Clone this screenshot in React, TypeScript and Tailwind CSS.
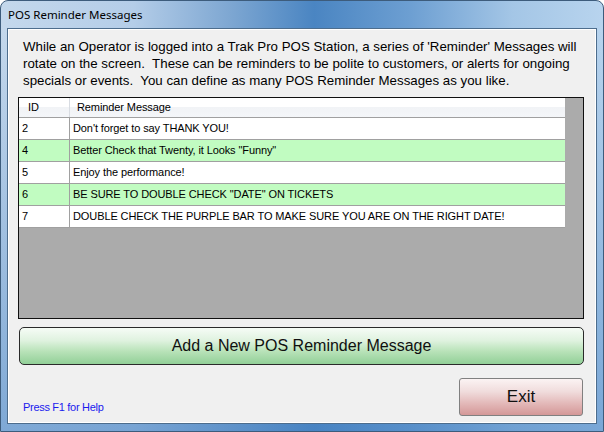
import React from "react";

const rows = [
  { id: "2", msg: "Don't forget to say THANK YOU!", green: false },
  { id: "4", msg: 'Better Check that Twenty, it Looks "Funny"', green: true },
  { id: "5", msg: "Enjoy the performance!", green: false },
  { id: "6", msg: 'BE SURE TO DOUBLE CHECK "DATE" ON TICKETS', green: true },
  { id: "7", msg: "DOUBLE CHECK THE PURPLE BAR TO MAKE SURE YOU ARE ON THE RIGHT DATE!", green: false },
];

export default function App() {
  return (
    <div className="w-[604px] h-[432px] relative overflow-hidden rounded-t-[8px] border border-[#3d5c7c] bg-[linear-gradient(90deg,#c4d8ec_0%,#b4cde8_22%,#7ea7d2_38%,#4a85c2_52%,#6d9fd2_68%,#a4c6e6_85%,#b8d4ee_100%)] flex flex-col">
      <div className="absolute inset-x-0 bottom-0 top-[28px] bg-[linear-gradient(180deg,rgba(80,140,200,0)_0%,rgba(70,130,195,0.55)_100%)] pointer-events-none" />
      <div className="h-[27px] flex items-center pl-[7px] relative">
        <span className="text-[11.5px] text-black" style={{ fontFamily: '"Noto Sans", "Open Sans", sans-serif' }}>
          POS Reminder Messages
        </span>
      </div>
      <div className="relative mx-[6px] mb-[7px] flex-1 border border-[#4d6d8d] bg-white p-px">
        <div className="w-full h-full bg-[#f0f0f0] flex flex-col" style={{ fontFamily: '"Liberation Sans", Arial, sans-serif' }}>
          <div className="pl-[14px] pt-[8px] text-[13.3px] leading-[17px] text-black">
            While an Operator is logged into a Trak Pro POS Station, a series of 'Reminder' Messages will
            <br />
            rotate on the screen.&nbsp; These can be reminders to be polite to customers, or alerts for ongoing
            <br />
            specials or events.&nbsp; You can define as many POS Reminder Messages as you like.
          </div>
          <div className="ml-[9px] mt-[8px] w-[566px] h-[222px] border border-[#101010] bg-[#ababab]">
            <div className="w-[546px] text-[11px] tracking-[-0.1px] text-black">
              <div className="h-[20px] flex border-b border-[#a0a0a0] bg-[linear-gradient(180deg,#ffffff_0%,#ffffff_45%,#f1f3f6_50%,#f4f6f9_100%)]">
                <div className="w-[51px] border-r border-[#d8dce2] pl-[9px] flex items-center">ID</div>
                <div className="flex-1 pl-[7px] flex items-center">Reminder Message</div>
              </div>
              {rows.map((r) => (
                <div
                  key={r.id}
                  className={`h-[22px] flex border-b border-[#a0a0a0] ${r.green ? "bg-[#c1fcc1]" : "bg-white"}`}
                >
                  <div className="w-[51px] border-r border-[#a0a0a0] pl-[3px] flex items-center">{r.id}</div>
                  <div className="flex-1 pl-[3px] flex items-center whitespace-nowrap">{r.msg}</div>
                </div>
              ))}
            </div>
          </div>
          <button className="ml-[10px] mt-[8px] w-[565px] h-[38px] rounded-[5px] border border-[#2a2a2a] bg-[linear-gradient(180deg,#f6fcf6_0%,#dff2df_35%,#b8e2b8_65%,#92d098_100%)] text-[16px] text-[#101010] flex items-center justify-center">
            Add a New POS Reminder Message
          </button>
          <div className="flex items-end justify-between mt-[13px] pr-[12px]">
            <div className="pl-[14px] pb-[1px] text-[11px] tracking-[-0.3px] text-[#1a1aee]">Press F1 for Help</div>
            <button className="w-[124px] h-[38px] rounded-[3px] border border-[#808080] bg-[linear-gradient(180deg,#fbf3f3_0%,#f0dcdc_35%,#e2b6b6_70%,#d49898_100%)] text-[17px] text-[#101010] flex items-center justify-center">
              Exit
            </button>
          </div>
        </div>
      </div>
    </div>
  );
}
